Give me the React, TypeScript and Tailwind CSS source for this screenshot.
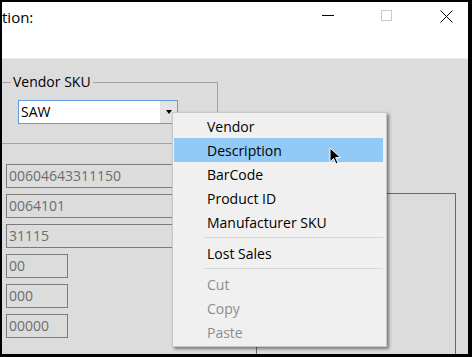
import React from 'react'

const FONT = { fontFamily: '"Segoe UI", "Open Sans", "Noto Sans", sans-serif' }

const FIELDS = [
  { value: '00604643311150', wide: true },
  { value: '0064101', wide: true },
  { value: '31115', wide: true },
  { value: '00', wide: false },
  { value: '000', wide: false },
  { value: '00000', wide: false },
]

type MenuEntry = { label: string; active?: boolean; disabled?: boolean } | 'sep'

const MENU: MenuEntry[] = [
  { label: 'Vendor' },
  { label: 'Description', active: true },
  { label: 'BarCode' },
  { label: 'Product ID' },
  { label: 'Manufacturer SKU' },
  'sep',
  { label: 'Lost Sales' },
  'sep',
  { label: 'Cut', disabled: true },
  { label: 'Copy', disabled: true },
  { label: 'Paste', disabled: true },
]

function ContextMenu() {
  return (
    <div className="absolute left-[172px] top-[112px] w-[215px] h-[235px] bg-[#f0f0f0] border border-[#c8c8c8] pt-[1px] pb-[2px] px-[1px] shadow-[2px_2px_3px_rgba(0,0,0,0.45)]">
      {MENU.map((item, i) =>
        item === 'sep' ? (
          <div key={i} className="h-[7px] flex items-center pl-[30px] pr-[2px]">
            <div className="h-px w-full bg-[#d7d7d7]" />
          </div>
        ) : (
          <div
            key={item.label}
            className={`h-[24px] flex items-center pl-[33px] text-[14px] ${
              item.active ? 'bg-[#91c9f7] mr-[2px]' : ''
            } ${item.disabled ? 'text-[#8d8d8d]' : 'text-black'}`}
          >
            {item.label}
          </div>
        )
      )}
    </div>
  )
}

function Cursor() {
  return (
    <svg className="absolute left-[329px] top-[147px]" width="13" height="19" viewBox="0 0 13 19">
      <path d="M1 1 L1 15 L4.5 11.5 L7 17 L9 16 L6.6 10.6 L11.5 10.6 Z" fill="#000" stroke="#fff" strokeWidth="1" strokeLinejoin="round" />
    </svg>
  )
}

export default function App() {
  return (
    <div className="relative w-[472px] h-[357px] bg-black pt-[2px] pl-[2px] pr-[4px] pb-[3px] overflow-hidden" style={FONT}>
      <div className="flex flex-col h-full">
        {/* Title bar */}
        <div className="h-[56px] bg-white flex items-start shrink-0">
          <div className="text-[15px] text-black leading-none pt-[8px]">tion:</div>
          <div className="ml-auto flex items-start pt-[8px] pr-[15px]">
            <div className="w-[12px] h-[10px] flex items-center">
              <div className="w-[12px] h-px bg-black" />
            </div>
            <div className="ml-[47px] w-[11px] h-[11px] border border-[#cccccc]" />
            <svg className="ml-[48px]" width="13" height="13" viewBox="0 0 13 13">
              <path d="M0.5 0.5 L12.5 12.5 M12.5 0.5 L0.5 12.5" stroke="#000" strokeWidth="1" />
            </svg>
          </div>
        </div>

        {/* Dialog body */}
        <div className="flex-1 bg-[#dcdcdc] border-t border-[#ececec] flex overflow-hidden">
          <div className="w-[254px] shrink-0 flex flex-col">
            {/* Vendor SKU group */}
            <div className="mt-[23px] h-[62px] w-[216px] border-t border-r border-b border-[#a3a3a3] relative">
              <span className="absolute left-[9px] -top-[11px] px-[2px] bg-[#dcdcdc] text-[14px] leading-[20px] text-black">
                Vendor SKU
              </span>
              <div className="mt-[17px] ml-[16px] w-[160px] h-[24px] border border-[#5e9ee0] bg-white flex">
                <div className="flex-1 text-[14px] leading-[22px] pl-[2px] text-black">SAW</div>
                <div className="w-[17px] bg-[#e3e3e3] flex items-center justify-center">
                  <div className="w-0 h-0 border-l-[3px] border-r-[3px] border-t-[4px] border-l-transparent border-r-transparent border-t-black" />
                </div>
              </div>
            </div>

            {/* Read-only fields */}
            <div className="mt-[20px] ml-[4px] flex flex-col gap-[6px]">
              {FIELDS.map((f) => (
                <div
                  key={f.value}
                  className={`h-[24px] border border-[#7a7a7a] text-[14px] leading-[22px] pl-[2px] text-[#6d6d6d] ${
                    f.wide ? 'w-[240px]' : 'w-[62px]'
                  }`}
                >
                  {f.value}
                </div>
              ))}
            </div>
          </div>

          {/* Right group */}
          <div className="mt-[134px] w-[200px] h-[260px] border-l border-t border-r border-[#6a6a6a]" />
        </div>
      </div>

      <ContextMenu />
      <Cursor />
    </div>
  )
}
